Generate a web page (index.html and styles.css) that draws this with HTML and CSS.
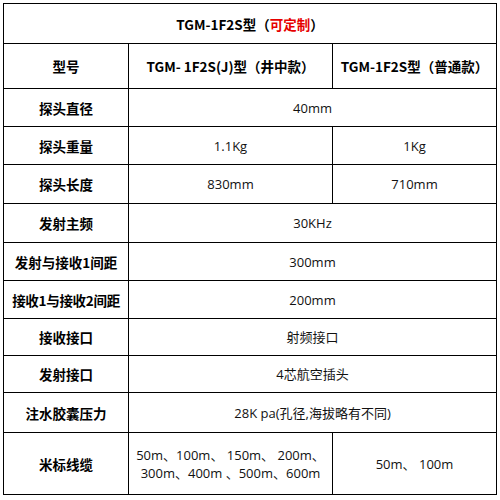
FILE: index.html
```html
<!DOCTYPE html>
<html lang="zh-CN">
<head>
<meta charset="utf-8">
<title>TGM-1F2S型</title>
<link rel="stylesheet" href="styles.css">
</head>
<body>
<table class="spec">
  <colgroup>
    <col class="c1">
    <col class="c2">
    <col class="c3">
  </colgroup>
  <tr class="r-title">
    <th colspan="3" class="title">TGM-1F2S型（<span class="red">可定制</span>）</th>
  </tr>
  <tr class="r-head">
    <th>型号</th>
    <th>TGM- 1F2S(J)型（井中款）</th>
    <th>TGM-1F2S型（普通款）</th>
  </tr>
  <tr class="r38">
    <th>探头直径</th>
    <td colspan="2">40mm</td>
  </tr>
  <tr class="r38">
    <th>探头重量</th>
    <td>1.1Kg</td>
    <td>1Kg</td>
  </tr>
  <tr class="r39">
    <th>探头长度</th>
    <td>830mm</td>
    <td>710mm</td>
  </tr>
  <tr class="r39">
    <th>发射主频</th>
    <td colspan="2">30KHz</td>
  </tr>
  <tr class="r38">
    <th>发射与接收1间距</th>
    <td colspan="2">300mm</td>
  </tr>
  <tr class="r38">
    <th class="tight">接收1与接收2间距</th>
    <td colspan="2">200mm</td>
  </tr>
  <tr class="r37">
    <th>接收接口</th>
    <td colspan="2">射频接口</td>
  </tr>
  <tr class="r37">
    <th>发射接口</th>
    <td colspan="2">4芯航空插头</td>
  </tr>
  <tr class="r-note">
    <th>注水胶囊压力</th>
    <td colspan="2">28K pa(孔径,海拔略有不同)</td>
  </tr>
  <tr class="r-cable">
    <th>米标线缆</th>
    <td class="multi">50m、100m、 150m、 200m、<br>300m、400m 、500m、600m</td>
    <td>50m、 100m</td>
  </tr>
</table>
</body>
</html>
```

FILE: styles.css
```css
html, body {
  margin: 0;
  padding: 0;
  background: #fff;
}

body {
  padding: 3px 0 0 3px;
  font-family: "Noto Sans CJK SC", "Open Sans", sans-serif;
  color: #000;
}

.spec {
  border-collapse: collapse;
  table-layout: fixed;
  width: 493px;
}

.c1 { width: 125px; }
.c2 { width: 204px; }
.c3 { width: 164px; }

.spec th,
.spec td {
  border: 1px solid #000;
  padding: 0;
  text-align: center;
  vertical-align: middle;
  font-size: 13px;
  line-height: 18px;
  white-space: nowrap;
}

.spec th {
  font-weight: bold;
  font-size: 13.5px;
}

.spec td {
  font-family: "Open Sans", "Noto Sans CJK SC", sans-serif;
  font-weight: normal;
  color: #111;
}

.tight {
  letter-spacing: -0.3px;
}

.red {
  color: #e60000;
}

.r-title { height: 40px; }
.r-head { height: 45px; }
.r37 { height: 37px; }
.r38 { height: 38px; }
.r39 { height: 39px; }
.r-note { height: 40px; }
.r-cable { height: 62px; }

.multi {
  line-height: 19px;
}
```
